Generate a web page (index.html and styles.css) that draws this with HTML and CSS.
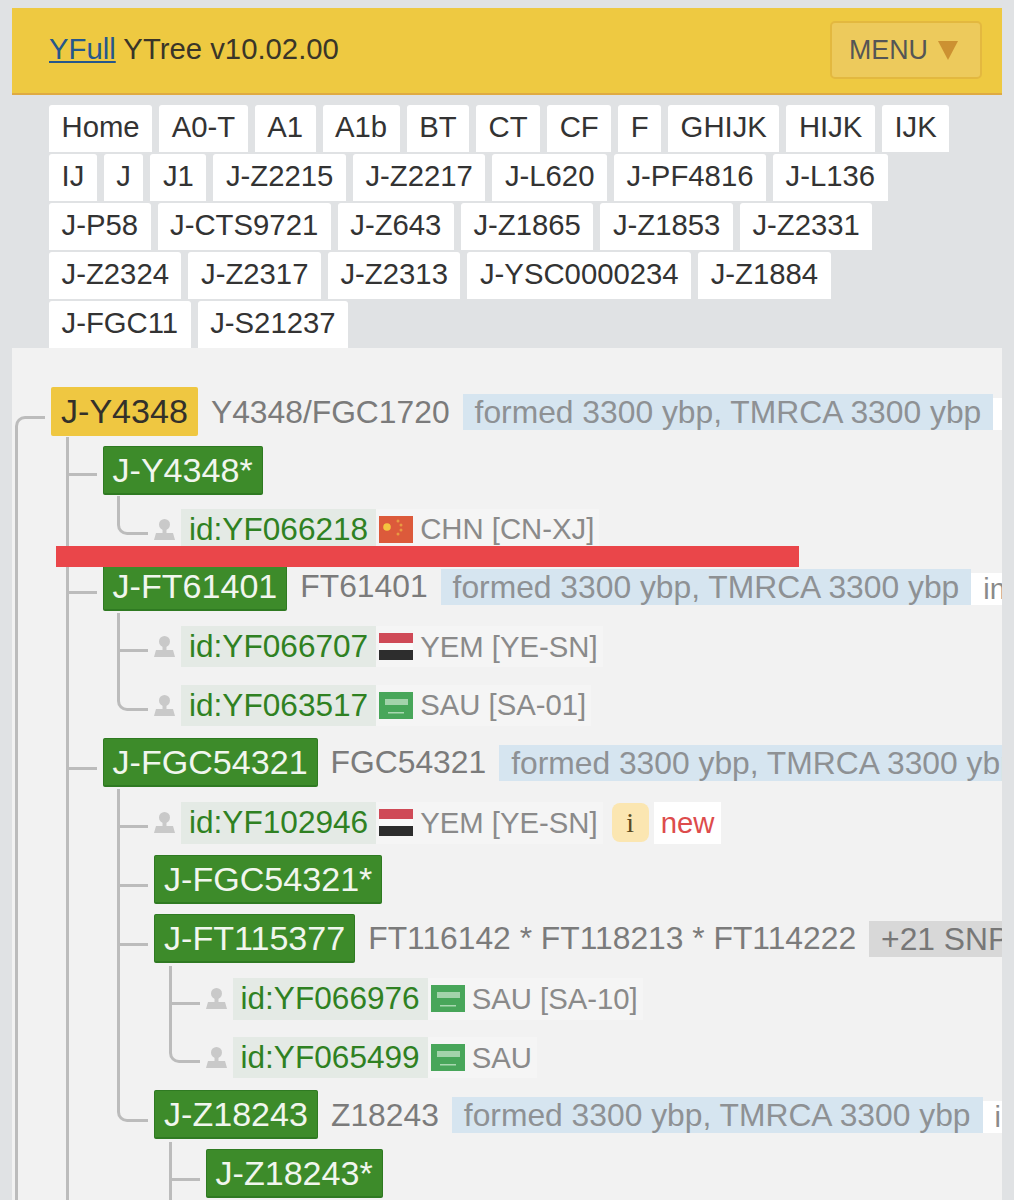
FILE: index.html
```html
<!DOCTYPE html>
<html lang="en">

<head>
    <meta charset="UTF-8">
    <meta name="viewport" content="width=device-width, initial-scale=1.0">
    <title>YFull YTree v10.02.00</title>
    <link rel="stylesheet" href="styles.css">
</head>

<body>
    <svg class="defs" width="0" height="0">
        <symbol id="person" viewBox="0 0 21 21">
            <circle cx="10.500" cy="5.500" r="5.500"/>
            <path d="M8.500 10 H12.500 V14 H19 L21 21 H0 L2 14 H8.500 Z"/>
        </symbol>
        <symbol id="flag-chn" viewBox="0 0 34 27">
            <rect width="34" height="27" fill="#dc5a3b"/>
            <circle cx="8" cy="11" r="3.800" fill="#f4c53f"/>
            <circle cx="19" cy="5" r="1.500" fill="#e89a42"/>
            <circle cx="22" cy="9" r="1.500" fill="#e89a42"/>
            <circle cx="22" cy="14" r="1.500" fill="#e89a42"/>
            <circle cx="19" cy="18" r="1.500" fill="#e89a42"/>
        </symbol>
        <symbol id="flag-yem" viewBox="0 0 34 27">
            <rect width="34" height="10" fill="#cf4a57"/>
            <rect y="10" width="34" height="7" fill="#fafafa"/>
            <rect y="17" width="34" height="10" fill="#2d2d2d"/>
        </symbol>
        <symbol id="flag-sau" viewBox="0 0 34 27">
            <rect width="34" height="27" fill="#48a65a"/>
            <rect x="6" y="7" width="23" height="6" fill="#a3d3ab"/>
            <rect x="9" y="20" width="16" height="1.500" fill="#a8d8b0"/>
        </symbol>
    </svg>

    <header class="topbar">
        <h1 class="brand"><a href="#">YFull</a> YTree v10.02.00</h1>
        <button class="menu-btn" type="button">MENU <span class="menu-arrow"></span></button>
    </header>

    <nav class="crumbs">
        <a href="#">Home</a>
        <a href="#">A0-T</a>
        <a href="#">A1</a>
        <a href="#">A1b</a>
        <a href="#">BT</a>
        <a href="#">CT</a>
        <a href="#">CF</a>
        <a href="#">F</a>
        <a href="#">GHIJK</a>
        <a href="#">HIJK</a>
        <a href="#">IJK</a>
        <a href="#">IJ</a>
        <a href="#">J</a>
        <a href="#">J1</a>
        <a href="#">J-Z2215</a>
        <a href="#">J-Z2217</a>
        <a href="#">J-L620</a>
        <a href="#">J-PF4816</a>
        <a href="#">J-L136</a>
        <a href="#">J-P58</a>
        <a href="#">J-CTS9721</a>
        <a href="#">J-Z643</a>
        <a href="#">J-Z1865</a>
        <a href="#">J-Z1853</a>
        <a href="#">J-Z2331</a>
        <a href="#">J-Z2324</a>
        <a href="#">J-Z2317</a>
        <a href="#">J-Z2313</a>
        <a href="#">J-YSC0000234</a>
        <a href="#">J-Z1884</a>
        <a href="#">J-FGC11</a>
        <a href="#">J-S21237</a>
    </nav>

    <main class="panel">
        <div class="redact"></div>
        <ul class="tree">
            <li class="root">
                <div class="row">
                    <a class="clade clade-main" href="#">J-Y4348</a>
                    <span class="snps">Y4348/FGC1720</span>
                    <span class="age">formed 3300 ybp, TMRCA 3300 ybp</span>
                    <span class="info">info</span>
                </div>
                <ul>
                    <li>
                        <div class="row"><a class="clade" href="#">J-Y4348*</a></div>
                        <ul>
                            <li>
                                <div class="row">
                                    <svg class="person"><use href="#person"/></svg>
                                    <a class="sample" href="#">id:YF066218</a>
                                    <span class="geo"><svg class="flag"><use href="#flag-chn"/></svg>CHN [CN-XJ]</span>
                                </div>
                            </li>
                        </ul>
                    </li>
                    <li>
                        <div class="row row-up">
                            <a class="clade" href="#">J-FT61401</a>
                            <span class="snps">FT61401</span>
                            <span class="age">formed 3300 ybp, TMRCA 3300 ybp</span>
                            <span class="info">info</span>
                        </div>
                        <ul>
                            <li>
                                <div class="row">
                                    <svg class="person"><use href="#person"/></svg>
                                    <a class="sample" href="#">id:YF066707</a>
                                    <span class="geo"><svg class="flag"><use href="#flag-yem"/></svg>YEM [YE-SN]</span>
                                </div>
                            </li>
                            <li>
                                <div class="row">
                                    <svg class="person"><use href="#person"/></svg>
                                    <a class="sample" href="#">id:YF063517</a>
                                    <span class="geo"><svg class="flag"><use href="#flag-sau"/></svg>SAU [SA-01]</span>
                                </div>
                            </li>
                        </ul>
                    </li>
                    <li>
                        <div class="row row-up">
                            <a class="clade" href="#">J-FGC54321</a>
                            <span class="snps">FGC54321</span>
                            <span class="age">formed 3300 ybp, TMRCA 3300 ybp</span>
                        </div>
                        <ul>
                            <li>
                                <div class="row">
                                    <svg class="person"><use href="#person"/></svg>
                                    <a class="sample" href="#">id:YF102946</a>
                                    <span class="geo"><svg class="flag"><use href="#flag-yem"/></svg>YEM [YE-SN]</span>
                                    <span class="note">i</span>
                                    <span class="new">new</span>
                                </div>
                            </li>
                            <li>
                                <div class="row row-up"><a class="clade" href="#">J-FGC54321*</a></div>
                            </li>
                            <li>
                                <div class="row row-up">
                                    <a class="clade" href="#">J-FT115377</a>
                                    <span class="snps">FT116142 * FT118213 * FT114222</span>
                                    <span class="more">+21 SNPs</span>
                                </div>
                                <ul>
                                    <li>
                                        <div class="row">
                                            <svg class="person"><use href="#person"/></svg>
                                            <a class="sample" href="#">id:YF066976</a>
                                            <span class="geo"><svg class="flag"><use href="#flag-sau"/></svg>SAU [SA-10]</span>
                                        </div>
                                    </li>
                                    <li>
                                        <div class="row">
                                            <svg class="person"><use href="#person"/></svg>
                                            <a class="sample" href="#">id:YF065499</a>
                                            <span class="geo"><svg class="flag"><use href="#flag-sau"/></svg>SAU</span>
                                        </div>
                                    </li>
                                </ul>
                            </li>
                            <li>
                                <div class="row row-up">
                                    <a class="clade" href="#">J-Z18243</a>
                                    <span class="snps">Z18243</span>
                                    <span class="age">formed 3300 ybp, TMRCA 3300 ybp</span>
                                    <span class="info">info</span>
                                </div>
                                <ul>
                                    <li>
                                        <div class="row row-up"><a class="clade" href="#">J-Z18243*</a></div>
                                        <!-- the rest of the tree is below the fold -->
                                        <ul>
                                            <li><div class="row"></div></li>
                                        </ul>
                                    </li>
                                    <li><div class="row"></div></li>
                                </ul>
                            </li>
                        </ul>
                    </li>
                    <li><div class="row"></div></li>
                </ul>
            </li>
            <li><div class="row"></div></li>
        </ul>
    </main>
</body>

</html>
```

FILE: styles.css
```css
html,
body {
    height: 1200px;
    overflow: hidden;
}

body {
    box-sizing: border-box;
    margin: 0;
    padding: 8px 12px 0;
    background-color: #e0e2e4;
    font-family: "Liberation Sans", Arial, sans-serif;
    color: #333;
    display: flex;
    flex-direction: column;
}

.defs {
    position: absolute;
}

/* barra do topo */
.topbar {
    box-sizing: border-box;
    height: 87px;
    padding: 0 20px 0 37px;
    background-color: #eec941;
    border-bottom: 2px solid #dfaa42;
    display: flex;
    align-items: center;
    justify-content: space-between;
    flex-shrink: 0;
}

.brand {
    margin: 0 0 4px;
    font-size: 29.3px;
    font-weight: normal;
    color: #3a3528;
}

.brand a {
    color: #26578c;
}

.menu-btn {
    box-sizing: border-box;
    width: 152px;
    height: 58px;
    margin-bottom: 1px;
    padding: 0 0 0 17px;
    background-color: #edca5c;
    border: 2px solid #e3b83f;
    border-radius: 5px;
    font-family: inherit;
    font-size: 26.8px;
    color: #555;
    display: flex;
    align-items: center;
    gap: 10px;
}

.menu-arrow {
    width: 0;
    height: 0;
    border-left: 10px solid transparent;
    border-right: 10px solid transparent;
    border-top: 19px solid #cc9132;
}

/* abas */
.crumbs {
    margin-top: 10px;
    padding: 0 40px 0 37px;
    display: flex;
    flex-wrap: wrap;
    gap: 2px 7px;
    flex-shrink: 0;
}

.crumbs a {
    height: 47px;
    line-height: 44px;
    padding: 0 12.5px;
    background-color: #fff;
    border-radius: 3px 3px 0 0;
    font-size: 29.3px;
    color: #333;
    text-decoration: none;
}

/* arvore */
.panel {
    position: relative;
    flex: 1;
    min-height: 0;
    overflow: hidden;
    box-sizing: border-box;
    padding-top: 34.65px;
    background-color: #f2f2f2;
}

.redact {
    position: absolute;
    z-index: 2;
    left: 44px;
    top: 198px;
    width: 743px;
    height: 21px;
    background-color: #ea464a;
}

.tree,
.tree ul {
    margin: 0;
    list-style: none;
}

.tree {
    padding: 0 0 0 39px;
}

.tree ul {
    padding: 0 0 0 51.5px;
}

.tree li {
    position: relative;
}

.tree li::before {
    content: "";
    position: absolute;
    left: -37px;
    top: -4px;
    box-sizing: border-box;
    width: 31px;
    height: 39px;
    border-left: 3px solid #bcbcbc;
    border-bottom: 3px solid #bcbcbc;
}

.tree li:last-child::before {
    border-bottom-left-radius: 10px;
}

.tree li:not(:last-child)::after {
    content: "";
    position: absolute;
    left: -37px;
    top: -4px;
    bottom: -4px;
    border-left: 3px solid #bcbcbc;
}

.tree > li.root::before {
    left: -36px;
    top: 33px;
    width: 30px;
    height: 30px;
    border-bottom: 0;
    border-top: 3px solid #bcbcbc;
    border-top-left-radius: 10px;
}

.tree > li.root::after {
    left: -36px;
    top: 45px;
}

.row {
    box-sizing: border-box;
    height: 58.7px;
    display: flex;
    align-items: center;
    white-space: nowrap;
    font-size: 31.8px;
}

/* as linhas de clado ficam um pouco mais acima */
.row-up {
    padding-bottom: 3.4px;
}

.clade {
    box-sizing: border-box;
    height: 49px;
    line-height: 46px;
    padding: 0 9px;
    background-color: #3d8b2a;
    border: 1px solid #2f7a22;
    border-bottom-width: 2px;
    border-radius: 2px;
    font-size: 34.1px;
    color: #f1f6ee;
    text-decoration: none;
}

.clade-main {
    padding: 0 10px;
    background-color: #efc741;
    border: 0;
    line-height: 49px;
    color: #33302a;
}

.snps {
    margin: 1px 0 0 13px;
    color: #7b7b7b;
}

.age {
    margin: 1px 0 0 13px;
    padding: 0 12px;
    height: 36px;
    line-height: 36px;
    background-color: #d6e5f0;
    color: #8e9194;
}

.info {
    padding: 0 12px;
    height: 32px;
    line-height: 32px;
    margin-top: 5px;
    background-color: #fff;
    font-size: 29px;
    color: #8a8a8a;
}

.more {
    margin: 1px 0 0 13px;
    padding: 0 12px;
    height: 36px;
    line-height: 36px;
    background-color: #d8d8d8;
    color: #777;
}

.person {
    width: 21px;
    height: 21px;
    margin-right: 6px;
    fill: #c9c9c9;
    flex-shrink: 0;
}

.sample {
    height: 41.5px;
    line-height: 41.5px;
    padding: 0 8px;
    background-color: #e4eae5;
    font-size: 31.6px;
    color: #2f8122;
    text-decoration: none;
}

.geo {
    height: 41.5px;
    padding: 0 5px 0 3px;
    background-color: #f5f5f5;
    color: #8a8a8a;
    font-size: 29.3px;
    display: flex;
    align-items: center;
    gap: 7px;
}

.flag {
    width: 34px;
    height: 27px;
    flex-shrink: 0;
}

.note {
    box-sizing: border-box;
    width: 37px;
    height: 39px;
    line-height: 39px;
    margin-left: 9px;
    background-color: #fbe6b1;
    border-radius: 8px;
    font-family: "Liberation Serif", serif;
    font-size: 28px;
    text-align: center;
    color: #5a4a1f;
}

.new {
    height: 41.5px;
    line-height: 41.5px;
    margin-left: 5px;
    padding: 0 7px;
    background-color: #fff;
    font-size: 29.3px;
    color: #dd4c4c;
}
```
